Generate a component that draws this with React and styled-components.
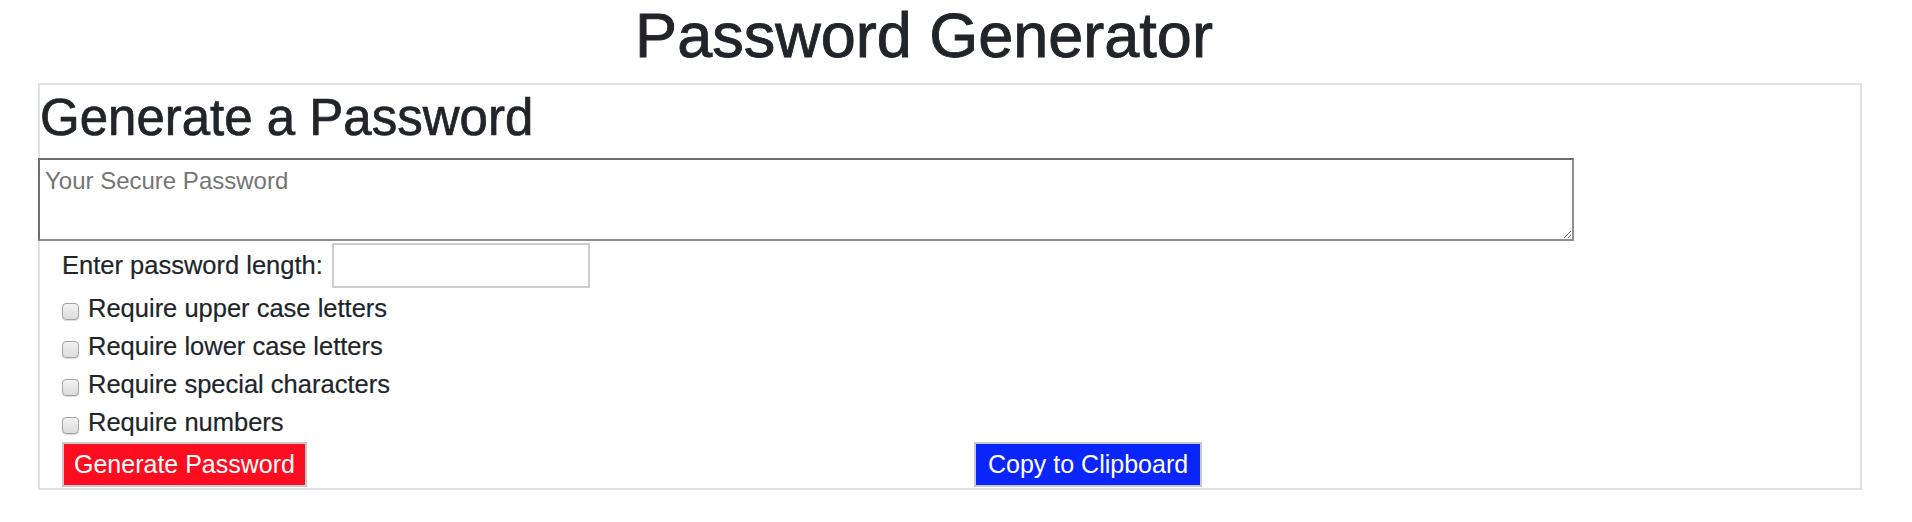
import React from 'react';
import styled, { createGlobalStyle } from 'styled-components';

const GlobalStyle = createGlobalStyle`
    body {
        margin: 0;
        background: #fff;
        color: #212529;
        font-family: 'Liberation Sans', Arial, sans-serif;
    }
`

const options = [
    'Require upper case letters',
    'Require lower case letters',
    'Require special characters',
    'Require numbers',
]

const App = () => {
    return (
        <>
            <GlobalStyle />
            <Title>Password Generator</Title>
            <Card>
                <Heading>Generate a Password</Heading>
                <Output placeholder='Your Secure Password' readOnly />
                <LengthRow>
                    <Label htmlFor='length'>Enter password length:</Label>
                    <LengthInput id='length' type='number' />
                </LengthRow>
                <Options>
                    {options.map((text) => (
                        <Option key={text}>
                            <Check type='checkbox' />
                            <span>{text}</span>
                        </Option>
                    ))}
                </Options>
                <Actions>
                    <Button $bg='#fd0d1f' $pad={10}>Generate Password</Button>
                    <Button $bg='#0b26fc' $pad={12}>Copy to Clipboard</Button>
                </Actions>
            </Card>
        </>
    )
}

export default App

const Title = styled.h1`
    margin: 0;
    padding-right: 64px;
    text-align: center;
    font-size: 63px;
    line-height: 70px;
    font-weight: 400;
    -webkit-text-stroke: 0.9px #212529;
`

const Card = styled.div`
    margin: 13px 50px 0 38px;
    border: 2px solid #dee2e6;
    padding-bottom: 1px;
`

const Heading = styled.h2`
    margin: 2px 0 10px;
    font-size: 51px;
    line-height: 61px;
    font-weight: 400;
    -webkit-text-stroke: 0.7px #212529;
`

const Output = styled.textarea`
    display: block;
    box-sizing: border-box;
    width: 1536px;
    height: 83px;
    margin-left: -2px;
    padding: 6px 5px;
    border: 2px solid;
    border-color: #6e6e6e #8f8f8f #8f8f8f #6e6e6e;
    font-family: 'Liberation Sans', Arial, sans-serif;
    font-size: 24px;
    line-height: 30px;
    color: #212529;
    resize: vertical;
    outline: none;
    &::placeholder {
        color: #757575;
    }
`

const LengthRow = styled.div`
    display: flex;
    align-items: center;
    gap: 9px;
    margin-top: 2px;
    padding-left: 22px;
`

const Label = styled.label`
    font-size: 25.5px;
    -webkit-text-stroke: 0.2px #212529;
`

const LengthInput = styled.input`
    box-sizing: border-box;
    width: 258px;
    height: 45px;
    border: 2px solid #cdcdcd;
    font-size: 24px;
    outline: none;
`

const Options = styled.div`
    display: flex;
    flex-direction: column;
    margin-top: 1px;
    padding-left: 22px;
`

const Option = styled.label`
    display: flex;
    align-items: center;
    gap: 9px;
    height: 38px;
    font-size: 25.5px;
    -webkit-text-stroke: 0.2px #212529;
`

const Check = styled.input`
    appearance: none;
    box-sizing: border-box;
    width: 17px;
    height: 17px;
    margin: 6px 0 0;
    border: 1px solid #a3a3a3;
    border-radius: 4px;
    background: linear-gradient(#f2f2f2, #dcdcdc);
    box-shadow: 0 1px 1px rgba(0, 0, 0, 0.15);
`

const Actions = styled.div`
    display: grid;
    grid-template-columns: 912px auto;
    justify-items: start;
    margin-top: 1px;
    padding-left: 22px;
`

const Button = styled.button`
    box-sizing: border-box;
    height: 45px;
    padding: 0 ${(p) => p.$pad}px;
    border: 2px solid #cacaca;
    border-radius: 0;
    background: ${(p) => p.$bg};
    color: #fff;
    font-family: 'Liberation Sans', Arial, sans-serif;
    font-size: 25px;
    cursor: pointer;
`
